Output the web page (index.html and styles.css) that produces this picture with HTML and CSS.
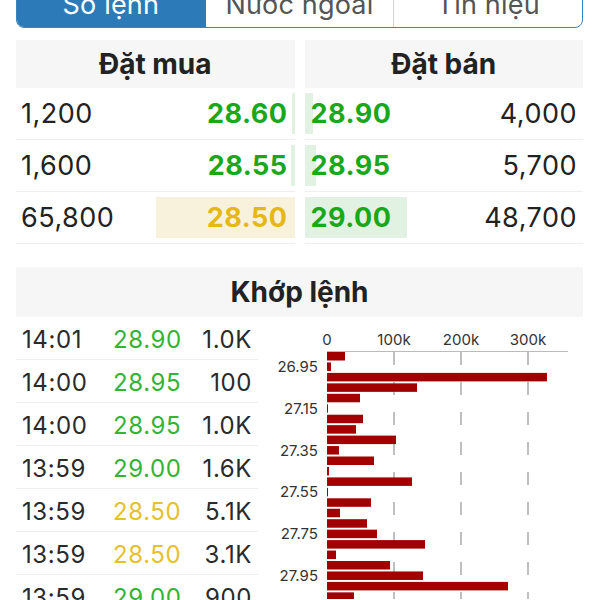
FILE: index.html
```html
<!DOCTYPE html>
<html lang="vi">
<head>
  <meta charset="UTF-8">
  <meta name="viewport" content="width=device-width, initial-scale=1.0">
  <title>Sổ lệnh</title>
  <link rel="stylesheet" href="styles.css">
</head>
<body>
  <div class="screen">
    <div class="tabs">
      <div class="tab active">Sổ lệnh</div>
      <div class="tab">Nước ngoài</div>
      <div class="tab">Tín hiệu</div>
    </div>

    <!-- Order book: bid / ask -->
    <div class="order-book">
      <div class="book-side bid">
        <div class="book-header">Đặt mua</div>
        <div class="book-row">
          <span class="depth up" style="width: 0.9%"></span>
          <span class="qty">1,200</span>
          <span class="price up">28.60</span>
        </div>
        <div class="book-row">
          <span class="depth up" style="width: 1.2%"></span>
          <span class="qty">1,600</span>
          <span class="price up">28.55</span>
        </div>
        <div class="book-row">
          <span class="depth ref" style="width: 49.8%"></span>
          <span class="qty">65,800</span>
          <span class="price ref">28.50</span>
        </div>
      </div>
      <div class="book-side ask">
        <div class="book-header">Đặt bán</div>
        <div class="book-row">
          <span class="depth up" style="width: 3%"></span>
          <span class="price up">28.90</span>
          <span class="qty">4,000</span>
        </div>
        <div class="book-row">
          <span class="depth up" style="width: 4%"></span>
          <span class="price up">28.95</span>
          <span class="qty">5,700</span>
        </div>
        <div class="book-row">
          <span class="depth up" style="width: 36.9%"></span>
          <span class="price up">29.00</span>
          <span class="qty">48,700</span>
        </div>
      </div>
    </div>

    <!-- Matched orders -->
    <div class="match">
      <div class="match-header">Khớp lệnh</div>
      <div class="match-body">
        <div class="trades">
          <div class="trade-row"><span>14:01</span><span class="up">28.90</span><span class="vol">1.0K</span></div>
          <div class="trade-row"><span>14:00</span><span class="up">28.95</span><span class="vol">100</span></div>
          <div class="trade-row"><span>14:00</span><span class="up">28.95</span><span class="vol">1.0K</span></div>
          <div class="trade-row"><span>13:59</span><span class="up">29.00</span><span class="vol">1.6K</span></div>
          <div class="trade-row"><span>13:59</span><span class="ref">28.50</span><span class="vol">5.1K</span></div>
          <div class="trade-row"><span>13:59</span><span class="ref">28.50</span><span class="vol">3.1K</span></div>
          <div class="trade-row"><span>13:59</span><span class="up">29.00</span><span class="vol">900</span></div>
        </div>

        <svg class="chart" width="325" height="282" viewBox="0 0 325 282">
          <g class="x-labels" text-anchor="middle">
            <text x="69" y="28">0</text>
            <text x="136" y="28">100k</text>
            <text x="203" y="28">200k</text>
            <text x="270" y="28">300k</text>
          </g>
          <line x1="69" y1="34.5" x2="310" y2="34.5" stroke="#bbb" />
          <g stroke="#aaa" stroke-width="1.5" stroke-dasharray="13 17">
            <line x1="136" y1="35" x2="136" y2="282" />
            <line x1="203" y1="35" x2="203" y2="282" />
            <line x1="270" y1="35" x2="270" y2="282" />
          </g>
          <g class="bars">
            <rect x="69" y="35" width="18" height="8.5" />
            <rect x="69" y="45.45" width="4" height="8.5" />
            <rect x="69" y="55.9" width="220" height="8.5" />
            <rect x="69" y="66.35" width="90" height="8.5" />
            <rect x="69" y="76.8" width="33" height="8.5" />
            <rect x="69" y="87.25" width="1" height="8.5" />
            <rect x="69" y="97.7" width="36" height="8.5" />
            <rect x="69" y="108.15" width="29" height="8.5" />
            <rect x="69" y="118.6" width="69" height="8.5" />
            <rect x="69" y="129.05" width="12" height="8.5" />
            <rect x="69" y="139.5" width="47" height="8.5" />
            <rect x="69" y="149.95" width="2" height="8.5" />
            <rect x="69" y="160.4" width="85" height="8.5" />
            <rect x="69" y="170.85" width="1" height="8.5" />
            <rect x="69" y="181.3" width="44" height="8.5" />
            <rect x="69" y="191.75" width="13" height="8.5" />
            <rect x="69" y="202.2" width="40" height="8.5" />
            <rect x="69" y="212.65" width="50" height="8.5" />
            <rect x="69" y="223.1" width="98" height="8.5" />
            <rect x="69" y="233.55" width="9" height="8.5" />
            <rect x="69" y="244" width="63" height="8.5" />
            <rect x="69" y="254.45" width="96" height="8.5" />
            <rect x="69" y="264.9" width="181" height="8.5" />
            <rect x="69" y="275.35" width="27" height="8.5" />
          </g>
          <g class="y-labels" text-anchor="end">
            <text x="60" y="55">26.95</text>
            <text x="60" y="96.8">27.15</text>
            <text x="60" y="138.6">27.35</text>
            <text x="60" y="180.4">27.55</text>
            <text x="60" y="222.2">27.75</text>
            <text x="60" y="264">27.95</text>
          </g>
        </svg>
      </div>
    </div>
  </div>
</body>
</html>
```

FILE: styles.css
```css
* {
  box-sizing: border-box;
  margin: 0;
  padding: 0;
}

body {
  font-family: Inter, 'Noto Sans', sans-serif;
  background: #fff;
  color: #222;
  overflow: hidden;
}

.screen {
  padding: 0 17px 0 16px;
}

/* Segmented tabs */
.tabs {
  display: flex;
  height: 48px;
  margin-top: -20px;
  border: 1px solid #3b85bf;
  border-radius: 8px;
  overflow: hidden;
}

.tab {
  flex: 1;
  display: flex;
  align-items: center;
  justify-content: center;
  font-size: 27px;
  letter-spacing: 0.2px;
  color: #555;
}

.tab + .tab {
  border-left: 1px solid #d2d2d2;
}

.tab.active {
  background: #2c7bb8;
  color: #fff;
}

.tab.active + .tab {
  border-left-color: #2c7bb8;
}

/* Order book */
.order-book {
  display: grid;
  grid-template-columns: 1fr 1fr;
  column-gap: 10px;
  margin-top: 12px;
}

.book-header {
  height: 48px;
  background: #f6f6f6;
  display: flex;
  align-items: center;
  justify-content: center;
  font-size: 28px;
  font-weight: 700;
}

.book-row {
  position: relative;
  height: 52px;
  border-bottom: 1px solid #eee;
  display: flex;
  align-items: center;
  justify-content: space-between;
  padding: 0 7px 0 5px;
  font-size: 27px;
  letter-spacing: 0.5px;
}

.ask .book-row {
  padding: 0 6px;
}

.depth {
  position: absolute;
  top: 5px;
  bottom: 5px;
}

.bid .depth {
  right: 0;
}

.ask .depth {
  left: 0;
}

.depth.up {
  background: #e2f2e2;
}

.depth.ref {
  background: #f8f2dc;
}

.qty,
.price {
  position: relative;
}

.price {
  font-weight: 700;
}

.price.up {
  color: #19a819;
}

.price.ref {
  color: #e5b814;
}

/* Matched orders */
.match {
  margin-top: 23px;
}

.match-header {
  height: 50px;
  background: #f6f6f6;
  display: flex;
  align-items: center;
  justify-content: center;
  font-size: 28px;
  font-weight: 700;
}

.match-body {
  display: grid;
  grid-template-columns: 242px 1fr;
}

.trade-row {
  display: grid;
  grid-template-columns: 91px 1fr auto;
  align-items: center;
  height: 43px;
  border-bottom: 1px solid #eee;
  padding: 2px 6px 0;
  font-size: 24px;
  letter-spacing: 0.6px;
  color: #2a2a2a;
}

.trade-row .up {
  color: #35b335;
}

.trade-row .ref {
  color: #e7c02a;
}

.chart {
  display: block;
  font-size: 15px;
}

.chart text {
  fill: #333;
}

.chart .bars {
  fill: #a20000;
}
```
